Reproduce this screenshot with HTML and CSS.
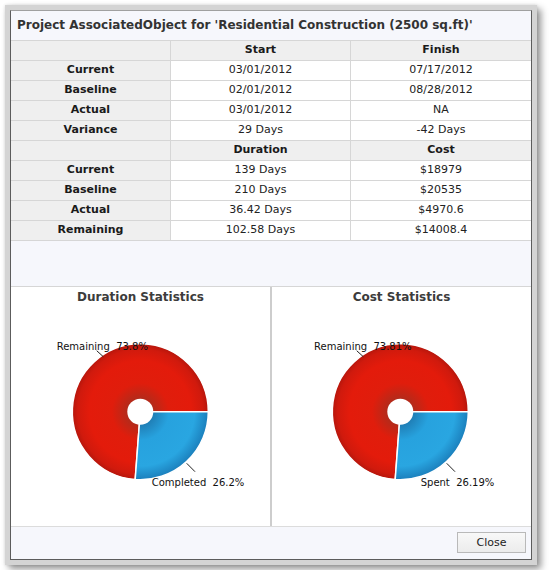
FILE: index.html
```html
<!DOCTYPE html>
<html>
<head>
<meta charset="utf-8">
<link rel="stylesheet" href="styles.css">
</head>
<body>
<div class="window">
  <div class="dialog">
    <div class="title">Project AssociatedObject for 'Residential Construction (2500 sq.ft)'</div>
    <table class="stats">
      <colgroup><col class="c1"><col class="c2"><col class="c3"></colgroup>
      <tr class="head"><th></th><th>Start</th><th>Finish</th></tr>
      <tr><th>Current</th><td>03/01/2012</td><td>07/17/2012</td></tr>
      <tr><th>Baseline</th><td>02/01/2012</td><td>08/28/2012</td></tr>
      <tr><th>Actual</th><td>03/01/2012</td><td>NA</td></tr>
      <tr><th>Variance</th><td>29 Days</td><td>-42 Days</td></tr>
      <tr class="head"><th></th><th>Duration</th><th>Cost</th></tr>
      <tr><th>Current</th><td>139 Days</td><td>$18979</td></tr>
      <tr><th>Baseline</th><td>210 Days</td><td>$20535</td></tr>
      <tr><th>Actual</th><td>36.42 Days</td><td>$4970.6</td></tr>
      <tr><th>Remaining</th><td>102.58 Days</td><td>$14008.4</td></tr>
    </table>
    <div class="spacer"></div>
    <div class="charts">
      <div class="panel left">
        <div class="panel-title">Duration Statistics</div>
        <svg class="pie" width="259" height="217" viewBox="0 0 259 217">
          <defs>
            <radialGradient id="redA" gradientUnits="userSpaceOnUse" cx="129.3" cy="102.7" r="68">
              <stop offset="0" stop-color="#8a2619"/>
              <stop offset="0.2" stop-color="#b52a1a"/>
              <stop offset="0.42" stop-color="#e01d0c"/>
              <stop offset="0.75" stop-color="#e31b0b"/>
              <stop offset="0.92" stop-color="#d01a0d"/>
              <stop offset="1" stop-color="#b5160c"/>
            </radialGradient>
            <radialGradient id="blueA" gradientUnits="userSpaceOnUse" cx="129.3" cy="102.7" r="68">
              <stop offset="0" stop-color="#17598a"/>
              <stop offset="0.2" stop-color="#2080b8"/>
              <stop offset="0.42" stop-color="#27a2de"/>
              <stop offset="0.8" stop-color="#29a6e1"/>
              <stop offset="1" stop-color="#1b7fbc"/>
            </radialGradient>
          </defs>
          <path d="M129.3 102.7 L124.18 170.51 A68 68 0 1 1 197.3 102.7 Z" fill="url(#redA)" stroke="#fff" stroke-width="1.5"/>
          <path d="M129.3 102.7 L197.3 102.7 A68 68 0 0 1 124.18 170.51 Z" fill="url(#blueA)" stroke="#fff" stroke-width="1.5"/>
          <circle cx="129.3" cy="102.7" r="13" fill="#fff"/>
          <line x1="85.7" y1="41.7" x2="92.3" y2="47.7" class="leader"/>
          <line x1="175.7" y1="154.3" x2="184" y2="162.7" class="leader"/>
          <text x="45.7" y="41" class="lbl">Remaining  73.8%</text>
          <text x="140.7" y="177" class="lbl">Completed  26.2%</text>
        </svg>
      </div>
      <div class="panel right">
        <div class="panel-title">Cost Statistics</div>
        <svg class="pie" width="259" height="217" viewBox="0 0 259 217">
          <defs>
            <radialGradient id="redB" gradientUnits="userSpaceOnUse" cx="128.3" cy="102.7" r="68">
              <stop offset="0" stop-color="#8a2619"/>
              <stop offset="0.2" stop-color="#b52a1a"/>
              <stop offset="0.42" stop-color="#e01d0c"/>
              <stop offset="0.75" stop-color="#e31b0b"/>
              <stop offset="0.92" stop-color="#d01a0d"/>
              <stop offset="1" stop-color="#b5160c"/>
            </radialGradient>
            <radialGradient id="blueB" gradientUnits="userSpaceOnUse" cx="128.3" cy="102.7" r="68">
              <stop offset="0" stop-color="#17598a"/>
              <stop offset="0.2" stop-color="#2080b8"/>
              <stop offset="0.42" stop-color="#27a2de"/>
              <stop offset="0.8" stop-color="#29a6e1"/>
              <stop offset="1" stop-color="#1b7fbc"/>
            </radialGradient>
          </defs>
          <path d="M128.3 102.7 L123.19 170.51 A68 68 0 1 1 196.3 102.7 Z" fill="url(#redB)" stroke="#fff" stroke-width="1.5"/>
          <path d="M128.3 102.7 L196.3 102.7 A68 68 0 0 1 123.19 170.51 Z" fill="url(#blueB)" stroke="#fff" stroke-width="1.5"/>
          <circle cx="128.3" cy="102.7" r="13" fill="#fff"/>
          <line x1="84.7" y1="41.7" x2="91.3" y2="47.7" class="leader"/>
          <line x1="174.7" y1="154.3" x2="183" y2="162.7" class="leader"/>
          <text x="42" y="41" class="lbl">Remaining  73.81%</text>
          <text x="148.7" y="177" class="lbl">Spent  26.19%</text>
        </svg>
      </div>
    </div>
    <div class="footer">
      <button class="btn">Close</button>
    </div>
  </div>
</div>
</body>
</html>
```

FILE: styles.css
```css
* {
  box-sizing: border-box;
}

body {
  margin: 0;
  background: #ffffff;
  font-family: "DejaVu Sans", Verdana, sans-serif;
  color: #1e1e1e;
}

.window {
  margin: 5px;
  width: 532px;
  height: 560px;
  border: 5px solid #d4d4d4;
  box-shadow: 0 0 3px rgba(0, 0, 0, 0.12), 4px 4px 7px rgba(0, 0, 0, 0.42);
}

.dialog {
  height: 100%;
  border: 1px solid #5c5c5c;
  border-top-color: #a0a0a0;
  background: #f6f7fc;
  display: flex;
  flex-direction: column;
}

.title {
  flex: none;
  height: 30px;
  border-bottom: 1px solid #d6d6d6;
  padding: 6px 0 0 6px;
  font-size: 12px;
  line-height: 16px;
  font-weight: bold;
  color: #333333;
  white-space: nowrap;
}

.stats {
  flex: none;
  width: 520px;
  table-layout: fixed;
  border-collapse: separate;
  border-spacing: 0;
  background: #ffffff;
  font-size: 11px;
}

.c1 { width: 160px; }
.c2 { width: 180px; }
.c3 { width: 180px; }

.stats th,
.stats td {
  padding: 0 0 1px 0;
  line-height: 18px;
  text-align: center;
  border-bottom: 1px solid #d6d6d6;
  border-right: 1px solid #d6d6d6;
  white-space: nowrap;
}

.stats th:last-child,
.stats td:last-child {
  border-right: none;
}

.stats th {
  background: #efefef;
  font-weight: bold;
  color: #1a1a1a;
}

.stats td {
  color: #222222;
}

.spacer {
  flex: none;
  height: 46px;
  border-bottom: 1px solid #d6d6d6;
}

.charts {
  flex: none;
  height: 239px;
  display: flex;
  background: #ffffff;
}

.panel {
  display: flex;
  flex-direction: column;
}

.panel.left {
  width: 261px;
  border-right: 2px solid #cdcdcd;
}

.panel.right {
  flex: 1;
}

.panel-title {
  height: 22px;
  padding-top: 2px;
  line-height: 16px;
  text-align: center;
  font-size: 12px;
  font-weight: bold;
  color: #3c3c3c;
}

.pie {
  display: block;
}

.leader {
  stroke: #222222;
  stroke-width: 1;
}

.lbl {
  font-family: "DejaVu Sans", Verdana, sans-serif;
  font-size: 10px;
  fill: #111111;
  white-space: pre;
}

.footer {
  flex: none;
  height: 33px;
  border-top: 1px solid #dcdcdc;
  padding: 5px;
  display: flex;
  justify-content: flex-end;
  align-items: flex-start;
}

.btn {
  width: 69px;
  height: 21px;
  padding: 0;
  border: 1px solid #b9b9b9;
  border-radius: 0;
  background: linear-gradient(#f8f8f8, #ececec);
  font-family: "DejaVu Sans", Verdana, sans-serif;
  font-size: 11px;
  color: #222222;
}
```
